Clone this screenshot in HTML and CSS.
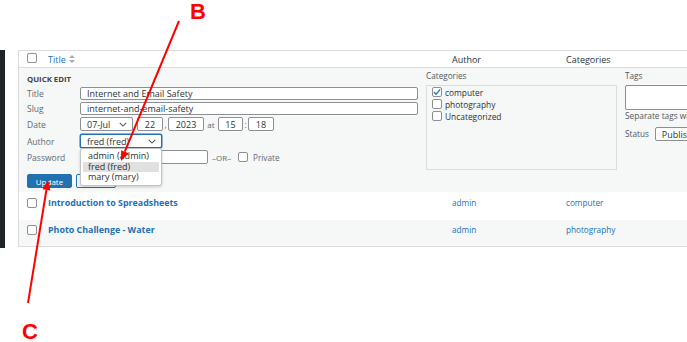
FILE: index.html
```html
<!DOCTYPE html>
<html>
    <head>
        <title>Posts</title>
        <link rel="stylesheet" href="styles.css">
    </head>
    <body>
        <div class="screen">
            <div class="adminbar"></div>
            <div class="content">
                <div class="list">
                    <div class="row head">
                        <div class="cb-cell"><span class="check"></span></div>
                        <div class="cell"><span class="sort">Title <svg width="6" height="8" viewBox="0 0 6 8"><path d="M3 0l3 3H0z M3 8L0 5h6z" fill="#a7aaad"/></svg></span></div>
                        <div class="cell">Author</div>
                        <div class="cell">Categories</div>
                    </div>

                    <div class="quick">
                        <div class="qe-left">
                            <h4>Quick Edit</h4>
                            <div class="field">
                                <span class="lbl">Title</span>
                                <input class="text wide" type="text" value="Internet and Email Safety">
                            </div>
                            <div class="field">
                                <span class="lbl">Slug</span>
                                <input class="text wide" type="text" value="internet-and-email-safety">
                            </div>
                            <div class="field tall">
                                <span class="lbl">Date</span>
                                <select class="pick month"><option>07-Jul</option></select>
                                <input class="text num day" type="text" value="22">
                                <span class="sep">,</span>
                                <input class="text num year" type="text" value="2023">
                                <span class="sep at">at</span>
                                <input class="text num hour" type="text" value="15">
                                <span class="sep">:</span>
                                <input class="text num min" type="text" value="18">
                            </div>
                            <div class="field tall author">
                                <span class="lbl">Author</span>
                                <select class="pick who"><option>fred (fred)</option></select>
                                <div class="menu">
                                    <div class="opt">admin (admin)</div>
                                    <div class="opt on">fred (fred)</div>
                                    <div class="opt">mary (mary)</div>
                                </div>
                            </div>
                            <div class="field tall">
                                <span class="lbl">Password</span>
                                <input class="text pass" type="text" value="">
                                <span class="or">–OR–</span>
                                <span class="check"></span>
                                <span class="private">Private</span>
                            </div>
                            <div class="actions">
                                <button class="btn primary">Update</button>
                                <button class="btn secondary">Cancel</button>
                            </div>
                        </div>

                        <div class="qe-cats">
                            <span class="small">Categories</span>
                            <div class="catbox">
                                <div class="cat"><span class="check on"><svg width="9" height="8" viewBox="0 0 9 8"><path d="M1 4l2.5 2.5L8 1" fill="none" stroke="#2271b1" stroke-width="1.4"/></svg></span>computer</div>
                                <div class="cat"><span class="check"></span>photography</div>
                                <div class="cat"><span class="check"></span>Uncategorized</div>
                            </div>
                        </div>

                        <div class="qe-tags">
                            <span class="small">Tags</span>
                            <div class="tagarea"></div>
                            <span class="hint">Separate tags with commas</span>
                            <div class="status">
                                <span class="small">Status</span>
                                <select class="pick state"><option>Published</option></select>
                            </div>
                        </div>
                    </div>

                    <div class="row post">
                        <div class="cb-cell"><span class="check"></span></div>
                        <div class="cell"><a class="title">Introduction to Spreadsheets</a></div>
                        <div class="cell"><a>admin</a></div>
                        <div class="cell"><a>computer</a></div>
                    </div>
                    <div class="row post alt">
                        <div class="cb-cell"><span class="check"></span></div>
                        <div class="cell"><a class="title">Photo Challenge - Water</a></div>
                        <div class="cell"><a>admin</a></div>
                        <div class="cell"><a>photography</a></div>
                    </div>
                </div>
            </div>
        </div>

        <svg class="marks" width="687" height="342" viewBox="0 0 687 342">
            <line x1="179" y1="21" x2="124.8" y2="151.7" stroke="#f00" stroke-width="2"/>
            <polygon points="121,161 128.5,153.2 121.1,150.2" fill="#f00"/>
            <text class="mark" x="190" y="19">B</text>
            <line x1="28" y1="303" x2="46.4" y2="190" stroke="#f00" stroke-width="2"/>
            <polygon points="48,180 50.4,190.5 42.5,189.3" fill="#f00"/>
            <text class="mark" x="22" y="339">C</text>
        </svg>
    </body>
</html>
```

FILE: styles.css
```css
* {
    margin: 0;
    padding: 0;
    box-sizing: border-box;
}

body {
    position: relative;
    width: 687px;
    height: 342px;
    overflow: hidden;
    background: #fff;
    font-family: "Open Sans", sans-serif;
    font-size: 8.5px;
    color: #2c3338;
}

.screen {
    display: flex;
    padding-top: 50px;
}

.adminbar {
    flex: none;
    width: 5px;
    height: 198px;
    background: #1d2327;
}

.content {
    flex: none;
    width: 760px;
    margin-left: 13px;
}

.list {
    border: 1px solid #dcdcde;
    border-right: none;
}

.row {
    display: grid;
    grid-template-columns: 25px 404px 114px 1fr;
}

.cell {
    padding: 0 4px;
}

.cb-cell {
    padding-left: 8px;
}

.check {
    display: inline-flex;
    align-items: center;
    justify-content: center;
    width: 10px;
    height: 10px;
    background: #fff;
    border: 1px solid #8c8f94;
    border-radius: 2px;
    flex: none;
}

.head {
    height: 17px;
    align-items: center;
    border-bottom: 1px solid #dcdcde;
    font-size: 9px;
    color: #2c3338;
}

.sort {
    display: inline-flex;
    align-items: center;
    gap: 3px;
    color: #2271b1;
}

/* quick edit panel */
.quick {
    display: flex;
    gap: 8px;
    padding: 4px 0 4px 8px;
    background: #f6f7f7;
}

.qe-left {
    flex: none;
    width: 391px;
    display: flex;
    flex-direction: column;
    gap: 2px;
    padding-top: 2px;
}

h4 {
    font-size: 7.8px;
    font-weight: 700;
    text-transform: uppercase;
    line-height: 10px;
    margin-bottom: 1px;
    color: #3c434a;
}

.field {
    display: flex;
    align-items: center;
    height: 13px;
}

.field.tall {
    height: 14px;
}

.lbl {
    width: 53px;
    flex: none;
    font-size: 8.5px;
    color: #646970;
}

.text,
.pick {
    height: 100%;
    font-family: "Open Sans", sans-serif;
    font-size: 9px;
    color: #2c3338;
    background: #fff;
    border: 1px solid #8c8f94;
    border-radius: 2px;
    outline: none;
    padding: 0 6px;
}

.wide {
    width: 338px;
}

.num {
    text-align: center;
    padding: 0;
}

.pick {
    appearance: none;
    text-align: left;
    background-image: url("data:image/svg+xml,%3Csvg xmlns='http://www.w3.org/2000/svg' viewBox='0 0 10 6'%3E%3Cpath d='M1 1l4 4 4-4' fill='none' stroke='%2350575e' stroke-width='1.3'/%3E%3C/svg%3E");
    background-repeat: no-repeat;
    background-position: right 5px center;
    background-size: 8px 5px;
    padding-right: 16px;
}

.month { width: 53px; }
.day { width: 26px; margin-left: 4px; }
.year { width: 36px; }
.hour { width: 25px; }
.min { width: 26px; }

.sep {
    width: 5px;
    text-align: center;
    color: #646970;
}

.sep.at {
    width: 14px;
    font-size: 8px;
}

.author {
    position: relative;
    margin-top: 1px;
}

.who {
    width: 82px;
    border-color: #2271b1;
    box-shadow: 0 0 0 0.5px #2271b1;
}

.menu {
    position: absolute;
    top: 14px;
    left: 53px;
    z-index: 2;
    width: 82px;
    padding: 2px;
    background: #fff;
    border: 1px solid #c3c4c7;
    border-radius: 3px;
    box-shadow: 0 1px 3px rgba(0, 0, 0, 0.2);
}

.opt {
    height: 10.5px;
    line-height: 10.5px;
    padding-left: 5px;
    font-size: 9px;
    color: #2c3338;
}

.opt.on {
    background: #e0e0e0;
}

.pass {
    width: 128px;
}

.or {
    width: 22px;
    margin: 0 4px;
    font-size: 8px;
    color: #646970;
}

.private {
    margin-left: 5px;
    font-size: 8.2px;
    color: #646970;
}

.actions {
    display: flex;
    gap: 4px;
    margin-top: 8px;
}

.btn {
    height: 14px;
    font-family: "Open Sans", sans-serif;
    font-size: 8px;
    border-radius: 2px;
    border: 1px solid #2271b1;
}

.primary {
    width: 45px;
    background: #2271b1;
    color: #fff;
}

.secondary {
    width: 40px;
    background: #f6f7f7;
    color: #2271b1;
}

.small {
    display: block;
    font-size: 8.2px;
    line-height: 8px;
    color: #50575e;
}

.qe-cats {
    flex: none;
    width: 191px;
    display: flex;
    flex-direction: column;
    gap: 5px;
}

.catbox {
    height: 85px;
    border: 1px solid #dcdcde;
    padding: 0 5px;
}

.cat {
    display: flex;
    align-items: center;
    gap: 3px;
    height: 12px;
    font-size: 8.4px;
}

.qe-tags {
    flex: 1;
    display: flex;
    flex-direction: column;
}

.tagarea {
    height: 25px;
    margin-top: 5px;
    background: #fff;
    border: 1px solid #8c8f94;
    border-radius: 2px;
}

.hint {
    margin-top: 1px;
    line-height: 10px;
    font-size: 8.3px;
    white-space: nowrap;
    color: #50575e;
}

.status {
    display: flex;
    align-items: center;
    gap: 6px;
    margin-top: 6px;
    height: 14px;
}

.state {
    width: 90px;
}

/* post rows */
.post {
    height: 28px;
    padding-top: 6px;
    background: #fff;
}

.post.alt {
    height: 26px;
    padding-top: 5px;
    background: #f6f7f7;
}

.post .cell {
    line-height: 10px;
}

.post a {
    font-size: 8.2px;
    color: #2271b1;
}

.post a.title {
    font-size: 8.9px;
    font-weight: 700;
}

/* annotation overlay */
.marks {
    position: absolute;
    left: 0;
    top: 0;
    z-index: 5;
}

.mark {
    font-family: "Liberation Sans", sans-serif;
    font-weight: 700;
    font-size: 22px;
    fill: #f00;
}
```
